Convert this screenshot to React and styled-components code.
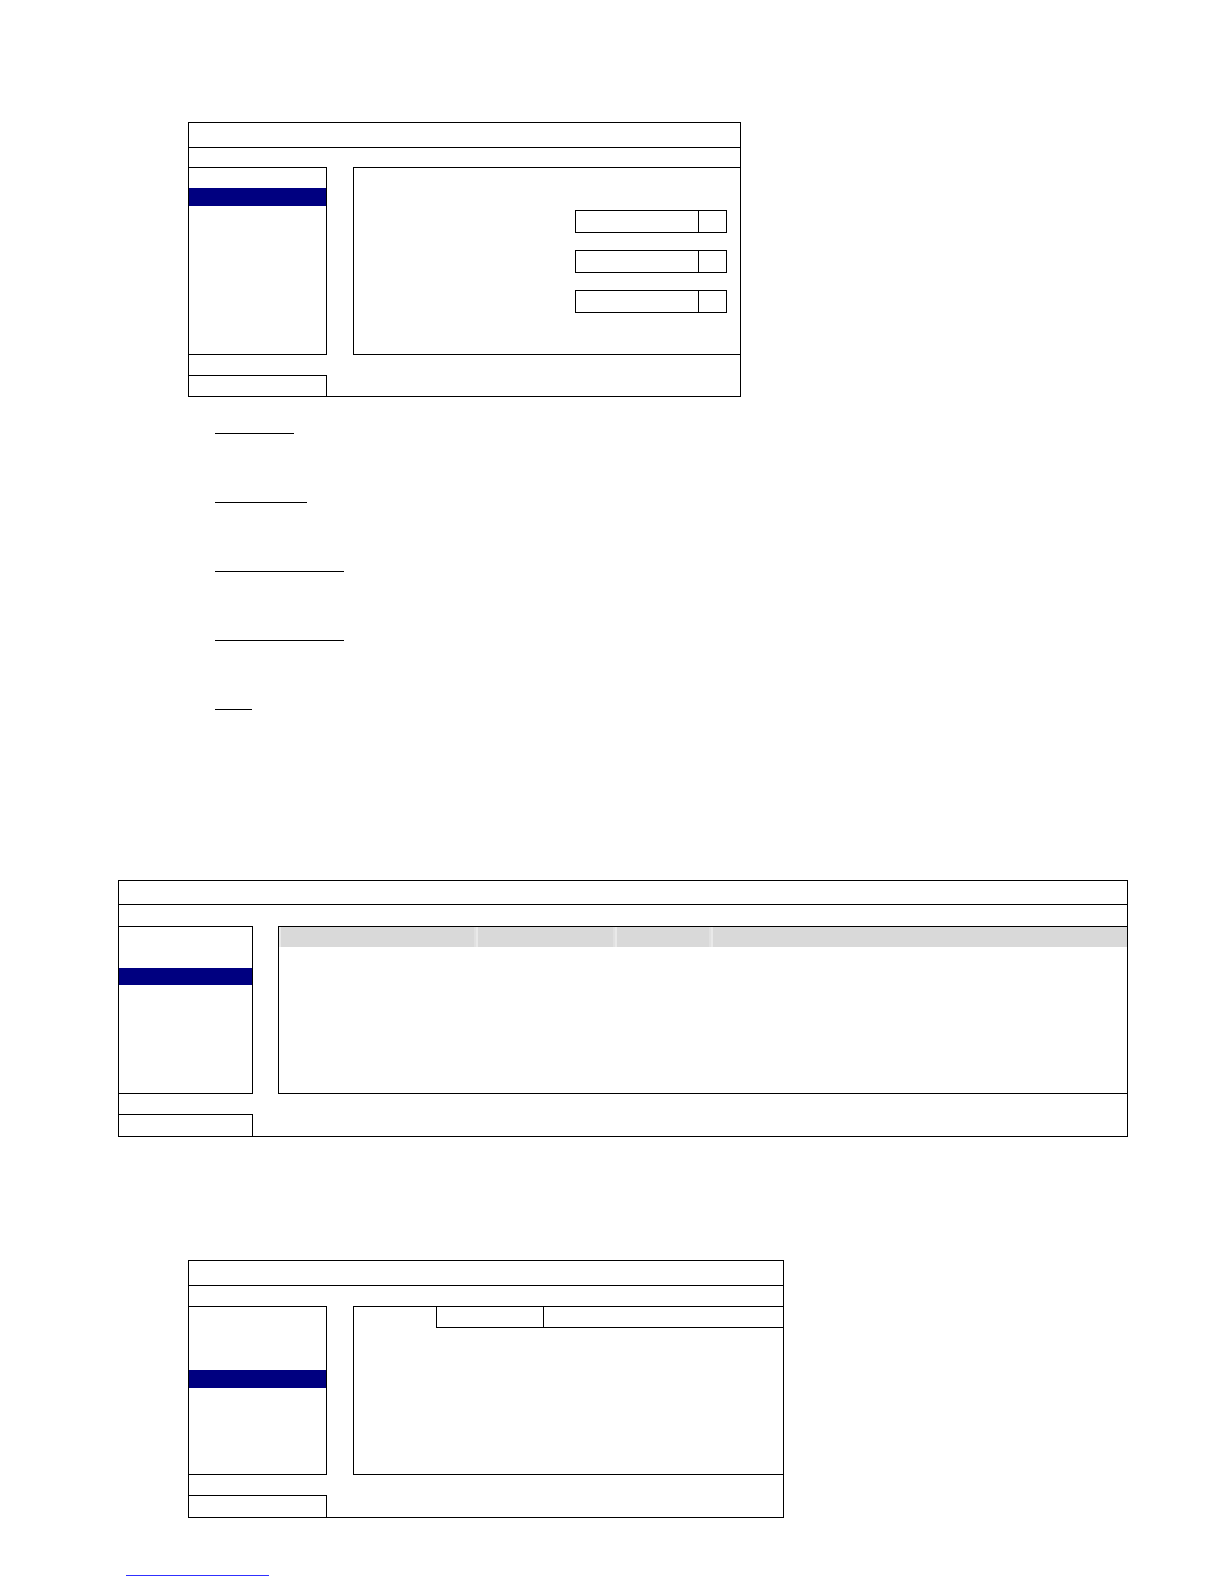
import React from "react";
import styled, { createGlobalStyle } from "styled-components";

const Global = createGlobalStyle`
  *, *::before, *::after { box-sizing: border-box; }
  html, body { margin: 0; padding: 0; background: #fff; }
  body { font-family: "Liberation Sans", Arial, sans-serif; }
`;

const Page = styled.div`
  width: 1224px;
  min-height: 1584px;
  padding-top: 122px;
  display: flex;
  flex-direction: column;
  align-items: flex-start;
`;

const Window = styled.div`
  width: ${(p) => p.$w}px;
  margin-left: ${(p) => p.$x}px;
  margin-top: ${(p) => p.$top || 0}px;
  border: 1px solid #000;
  display: flex;
  flex-direction: column;
`;

const TitleBar = styled.div`
  height: ${(p) => p.$h + 1}px;
  border-bottom: 1px solid #000;
`;

const Body = styled.div`
  display: flex;
  gap: ${(p) => p.$gap}px;
  margin: ${(p) => p.$top}px -1px 0 -1px;
`;

const MenuList = styled.div`
  width: ${(p) => p.$w}px;
  height: ${(p) => p.$h}px;
  border: 1px solid #000;
  padding-top: ${(p) => p.$hl}px;
  flex: none;
`;

const MenuItem = styled.div`
  height: ${(p) => p.$h}px;
  background: #000080;
`;

const Panel = styled.div`
  flex: 1;
  height: ${(p) => p.$h}px;
  border: 1px solid #000;
`;

const FieldPanel = styled(Panel)`
  display: flex;
  flex-direction: column;
  align-items: flex-end;
  padding: 42px 13px 0 0;
  gap: 17px;
`;

const Dropdown = styled.div`
  width: 152px;
  height: 23px;
  border: 1px solid #000;
  display: flex;
`;

const DropValue = styled.div`
  width: 123px;
  border-right: 1px solid #000;
`;

const DropArrow = styled.div`
  flex: 1;
`;

const HeaderRow = styled.div`
  display: grid;
  grid-template-columns: 197px 139px 96px 1fr;
  height: 20px;
`;

const HeaderCell = styled.div`
  background: #d9d9d9;
  border-left: 2px solid #e9e9e9;
  border-right: ${(p) => (p.$last ? "0" : "2px solid #e1e1e1")};
`;

const TabStrip = styled.div`
  display: flex;
  height: 21px;
`;

const Tab = styled.div`
  width: ${(p) => (p.$w ? `${p.$w}px` : "auto")};
  flex: ${(p) => (p.$w ? "none" : "1")};
  border-left: ${(p) => (p.$open ? "0" : "1px solid #000")};
  border-bottom: ${(p) => (p.$open ? "0" : "1px solid #000")};
`;

const StatusBox = styled.div`
  width: ${(p) => p.$w}px;
  height: ${(p) => p.$h}px;
  border: 1px solid #000;
  margin: 20px 0 -1px -1px;
`;

const Notes = styled.div`
  display: flex;
  flex-direction: column;
  gap: 68px;
  margin: 36px 0 0 215px;
`;

const NoteRule = styled.div`
  width: ${(p) => p.$w}px;
  height: 1px;
  border-top: 1.4px solid #000;
`;

const FooterRule = styled.div`
  width: 143px;
  height: 1px;
  margin: 57px 0 0 126px;
  background: #3030ff;
`;

const Frame = ({ x, top, w, titleH, bodyTop, listW, listH, hl, hlH, gap, statusH, children, PanelKind = Panel }) => (
  <Window $x={x} $w={w} $top={top}>
    <TitleBar $h={titleH - 1} />
    <Body $top={bodyTop} $gap={gap}>
      <MenuList $w={listW} $h={listH} $hl={hl}>
        <MenuItem $h={hlH} />
      </MenuList>
      <PanelKind $h={listH}>{children}</PanelKind>
    </Body>
    <StatusBox $w={listW} $h={statusH} />
  </Window>
);

export default function App() {
  return (
    <>
      <Global />
      <Page>
        <Frame x={188} w={553} titleH={25} bodyTop={19} listW={139} listH={188} hl={20} hlH={18} gap={26} statusH={22} PanelKind={FieldPanel}>
          {[0, 1, 2].map((i) => (
            <Dropdown key={i}>
              <DropValue />
              <DropArrow />
            </Dropdown>
          ))}
        </Frame>

        <Notes>
          {[79, 92, 129, 129, 37].map((w, i) => (
            <NoteRule key={i} $w={w} />
          ))}
        </Notes>

        <Frame x={118} top={170} w={1010} titleH={24} bodyTop={21} listW={135} listH={168} hl={41} hlH={17} gap={25} statusH={23}>
          <HeaderRow>
            <HeaderCell />
            <HeaderCell />
            <HeaderCell />
            <HeaderCell $last />
          </HeaderRow>
        </Frame>

        <Frame x={188} top={123} w={596} titleH={25} bodyTop={20} listW={139} listH={169} hl={63} hlH={18} gap={26} statusH={23}>
          <TabStrip>
            <Tab $open $w={82} />
            <Tab $w={107} />
            <Tab />
          </TabStrip>
        </Frame>

        <FooterRule />
      </Page>
    </>
  );
}
